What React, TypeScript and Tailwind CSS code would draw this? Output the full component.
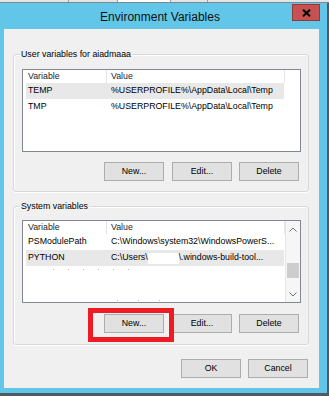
import React from "react";

const Btn = ({ label, className = "" }: { label: string; className?: string }) => (
  <div
    className={`h-[19px] w-[60px] flex items-center justify-center bg-[#e1e1e1] border border-[#adadad] text-[8.8px] text-black ${className}`}
  >
    {label}
  </div>
);

const Chevron = ({ up }: { up?: boolean }) => (
  <svg width="8" height="5" viewBox="0 0 8 5">
    <path
      d={up ? "M0.5 4.5 L4 1 L7.5 4.5" : "M0.5 0.5 L4 4 L7.5 0.5"}
      fill="none"
      stroke="#707070"
      strokeWidth="1"
    />
  </svg>
);

const Header = () => (
  <div className="h-[13px] flex text-[8.8px] leading-[13px] text-[#1e1e1e] shrink-0">
    <div className="w-[84px] pl-[5px] border-r border-[#e5e5e5]">Variable</div>
    <div className="w-[178px] pl-[4px] border-r border-[#e5e5e5]">Value</div>
    <div className="flex-1" />
  </div>
);

const Row = ({ name, value, hl }: { name: React.ReactNode; value: React.ReactNode; hl?: boolean }) => (
  <div
    className={`ml-[3px] w-[258px] h-[16px] flex items-center text-[8.8px] text-black whitespace-nowrap ${
      hl ? "bg-[#e8e8e8]" : ""
    }`}
  >
    <div className="w-[81px] pl-[2px]">{name}</div>
    <div className="pl-[4px] flex items-center">{value}</div>
  </div>
);

const GroupLabel = ({ text }: { text: string }) => (
  <div className="-mt-[7px] ml-[6px] w-fit px-[1px] bg-[#f0f0f0] text-[8.8px] leading-[12px] text-black">
    {text}
  </div>
);

export default function App() {
  return (
    <div
      className="relative w-[329px] h-[396px] overflow-hidden flex flex-col bg-[#4f5a64]"
      style={{ fontFamily: '"Liberation Sans", Arial, sans-serif' }}
    >
      {/* strip of the window behind */}
      <div className="h-[3px] shrink-0 flex bg-[#e4e4e4] border-b border-[#7d8790]">
        <div className="w-[68px]" />
        <div className="w-[1px] bg-[#9a9a9a]" />
        <div className="w-[48px]" />
        <div className="w-[1px] bg-[#9a9a9a]" />
        <div className="w-[52px] bg-white" />
        <div className="w-[1px] bg-[#9a9a9a]" />
        <div className="w-[36px]" />
        <div className="w-[1px] bg-[#9a9a9a]" />
      </div>

      {/* window */}
      <div className="flex-1 flex flex-col bg-[#62c6e8] mr-[2px] mb-[3px]">
        {/* title bar */}
        <div className="h-[26px] shrink-0 flex items-start">
          <div className="flex-1 pl-[28px] text-center text-[12px] leading-[14px] pt-[7px] text-[#111]">
            Environment Variables
          </div>
          <div className="mt-[1px] mr-[7px] w-[28px] h-[17px] bg-[#c75050] border border-[#8c3a3a] flex items-center justify-center">
            <svg width="9" height="8" viewBox="0 0 9 8">
              <path d="M1 0.8 L8 7.2 M8 0.8 L1 7.2" stroke="#000" strokeWidth="2.1" />
            </svg>
          </div>
        </div>

        {/* client */}
        <div className="flex-1 ml-[4px] mr-[8px] mb-[5px] bg-[#f0f0f0] flex flex-col">
          {/* User variables */}
          <div className="mt-[25px] ml-[9px] mr-[10px] border border-[#d8d8d8] rounded-[3px] shadow-[inset_1px_1px_0_#fff,0_1px_0_#fff] flex flex-col pb-[10px]">
            <GroupLabel text="User variables for aiadmaaa" />
            <div className="mt-[9px] ml-[8px] mr-[7px] h-[83px] border border-[#828790] bg-white flex flex-col">
              <Header />
              <Row name="TEMP" value="%USERPROFILE%\AppData\Local\Temp" hl />
              <Row name="TMP" value="%USERPROFILE%\AppData\Local\Temp" />
            </div>
            <div className="mt-[10px] mr-[9px] flex justify-end">
              <Btn label="New..." className="mr-[8px]" />
              <Btn label="Edit..." className="mr-[7px]" />
              <Btn label="Delete" />
            </div>
          </div>

          {/* System variables */}
          <div className="mt-[14px] ml-[9px] mr-[10px] border border-[#d8d8d8] rounded-[3px] shadow-[inset_1px_1px_0_#fff,0_1px_0_#fff] flex flex-col pb-[11px]">
            <GroupLabel text="System variables" />
            <div className="mt-[8px] ml-[8px] mr-[7px] h-[83px] border border-[#828790] bg-white flex">
              <div className="flex-1 flex flex-col">
                <Header />
                <Row name="PSModulePath" value="C:\Windows\system32\WindowsPowerS..." />
                <Row
                  name="PYTHON"
                  value={
                    <>
                      <span>C:\Users\</span>
                      <span className="inline-block w-[31px] h-[11px] bg-white" />
                      <span>\.windows-build-tool...</span>
                    </>
                  }
                  hl
                />
                <div className="ml-[30px] mt-[3px] flex gap-[14px]">
                  {[0, 1, 2, 3, 4, 5].map((i) => (
                    <span key={i} className="w-[1px] h-[1px] bg-[#b8b8b8]" />
                  ))}
                </div>
                <div className="flex-1" />
                <div className="ml-[94px] mb-[1px] flex gap-[20px]">
                  {[0, 1, 2].map((i) => (
                    <span key={i} className="w-[1px] h-[1px] bg-[#b8b8b8]" />
                  ))}
                </div>
              </div>
              <div className="w-[16px] flex flex-col border-l border-[#e6e6e6] bg-[#f6f6f6]">
                <div className="h-[16px] flex items-center justify-center">
                  <Chevron up />
                </div>
                <div className="flex-1 flex flex-col">
                  <div className="h-[26px]" />
                  <div className="h-[15px] mx-[1px] bg-[#cdcdcd]" />
                </div>
                <div className="h-[16px] flex items-center justify-center">
                  <Chevron />
                </div>
              </div>
            </div>
            <div className="mt-[11px] mr-[9px] flex justify-end">
              <Btn label="New..." className="mr-[8px]" />
              <Btn label="Edit..." className="mr-[7px]" />
              <Btn label="Delete" />
            </div>
          </div>

          {/* OK / Cancel */}
          <div className="mt-[14px] mr-[11px] flex justify-end">
            <Btn label="OK" className="mr-[7px] border-[#6fa7dc]" />
            <Btn label="Cancel" />
          </div>
        </div>
      </div>

      {/* red annotation box */}
      <div className="absolute left-[88px] top-[308px] w-[86px] h-[34px] border-[5px] border-[#ed1c24]" />
    </div>
  );
}
